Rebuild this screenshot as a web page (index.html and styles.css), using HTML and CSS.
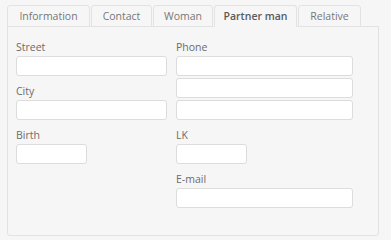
FILE: index.html
```html
<!DOCTYPE html>
<html lang="en">
<head>
  <meta charset="UTF-8">
  <meta name="viewport" content="width=device-width, initial-scale=1.0">
  <title>Partner man</title>
  <link rel="stylesheet" href="styles.css">
</head>
<body>
  <div class="tabs">
    <ul class="tab-list">
      <li class="tab">Information</li>
      <li class="tab">Contact</li>
      <li class="tab">Woman</li>
      <li class="tab active">Partner man</li>
      <li class="tab">Relative</li>
    </ul>

    <div class="panel">
      <div class="column col-left">
        <div class="field">
          <label>Street</label>
          <input type="text">
        </div>
        <div class="field">
          <label>City</label>
          <input type="text">
        </div>
        <div class="field">
          <label>Birth</label>
          <input type="text" class="short">
        </div>
      </div>

      <div class="column col-right">
        <div class="field">
          <label>Phone</label>
          <input type="text">
          <input type="text">
          <input type="text">
        </div>
        <div class="field">
          <label>LK</label>
          <input type="text" class="short">
        </div>
        <div class="field">
          <label>E-mail</label>
          <input type="text">
        </div>
      </div>
    </div>
  </div>
</body>
</html>
```

FILE: styles.css
```css
:root {
  --bg: #f6f6f6;
  --border: #e2e2e2;
  --input-border: #dcdcdc;
  --text: #6b6b6b;
  --text-strong: #5a5a5a;
}

* {
  margin: 0;
  padding: 0;
  box-sizing: border-box;
}

body {
  font-family: "Open Sans", "Segoe UI", sans-serif;
  font-size: 10.5px;
  color: var(--text);
  background: var(--bg);
  padding: 5px 12px 0 7px;
}

.tab-list {
  list-style: none;
  display: flex;
  gap: 1px;
}

.tab {
  height: 22px;
  line-height: 20px;
  text-align: center;
  white-space: nowrap;
  border: 1px solid var(--border);
  border-radius: 3px 3px 0 0;
  background: var(--bg);
  color: #777;
  margin-bottom: -1px;
  position: relative;
}

.tab:nth-child(1) { width: 83px; }
.tab:nth-child(2) { width: 61px; }
.tab:nth-child(3) { width: 60px; }
.tab:nth-child(4) { width: 83px; }
.tab:nth-child(5) { width: 63px; }

.tab.active {
  font-weight: 600;
  color: var(--text-strong);
  border-bottom-color: var(--bg);
  z-index: 1;
}

.panel {
  height: 210px;
  border: 1px solid var(--border);
  border-radius: 0 0 3px 3px;
  padding: 13px 8px 0;
  display: flex;
  gap: 9px;
}

.col-left {
  width: 151px;
}

.col-right {
  width: 177px;
}

.field {
  display: flex;
  flex-direction: column;
  gap: 2px;
  margin-bottom: 8px;
}

.field label {
  line-height: 14px;
}

.field input {
  height: 20px;
  width: 100%;
  border: 1px solid var(--input-border);
  border-radius: 3px;
  background: #fff;
  outline: none;
}

.field input.short {
  width: 71px;
}
```
